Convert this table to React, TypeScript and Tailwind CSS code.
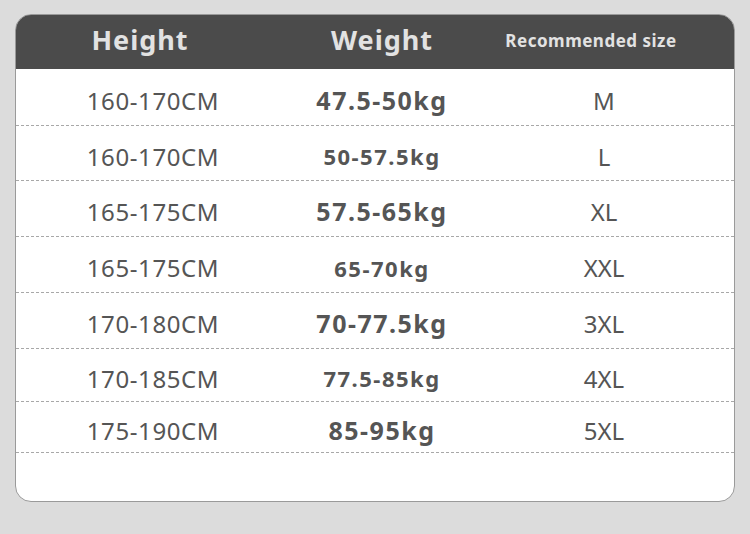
const rows = [
  { h: "160-170CM", w: "47.5-50kg", s: "M", big: true, ht: "h-[57px]" },
  { h: "160-170CM", w: "50-57.5kg", s: "L", big: false, ht: "h-[55px]" },
  { h: "165-175CM", w: "57.5-65kg", s: "XL", big: true, ht: "h-[56px]" },
  { h: "165-175CM", w: "65-70kg", s: "XXL", big: false, ht: "h-[56px]" },
  { h: "170-180CM", w: "70-77.5kg", s: "3XL", big: true, ht: "h-[56px]" },
  { h: "170-185CM", w: "77.5-85kg", s: "4XL", big: false, ht: "h-[53px]" },
  { h: "175-190CM", w: "85-95kg", s: "5XL", big: true, ht: "h-[51px]" },
];

export default function App() {
  return (
    <div className="w-[750px] h-[534px] bg-[#dcdcdc] pt-[14px] pl-[15px] font-['Noto_Sans','Open_Sans',sans-serif]">
      <div className="w-[720px] h-[488px] rounded-[16px] bg-white border border-[#9a9a9a] overflow-hidden">
        <div className="h-[54px] bg-[#4b4b4b] grid grid-cols-[274px_184px_1fr] items-center text-[#e2e2e2] font-bold pb-[3px]">
          <div className="text-center text-[27px] tracking-[1px] pr-[26px]">Height</div>
          <div className="text-center text-[27px] tracking-[1px]">Weight</div>
          <div className="text-center text-[17px] tracking-[0.5px] pr-[26px]">Recommended size</div>
        </div>
        {rows.map((r, i) => (
          <div
            key={i}
            className={`grid grid-cols-[274px_184px_1fr] items-center border-b border-dashed border-[#a8a8a8] text-[#555] pt-[7px] ${r.ht}`}
          >
            <div className="text-center text-[24px] tracking-[0.6px]">{r.h}</div>
            <div
              className={`text-center font-bold tracking-[1.5px] ${r.big ? "text-[25px]" : "text-[22px]"}`}
            >
              {r.w}
            </div>
            <div className="text-center text-[24px]">{r.s}</div>
          </div>
        ))}
      </div>
    </div>
  );
}
